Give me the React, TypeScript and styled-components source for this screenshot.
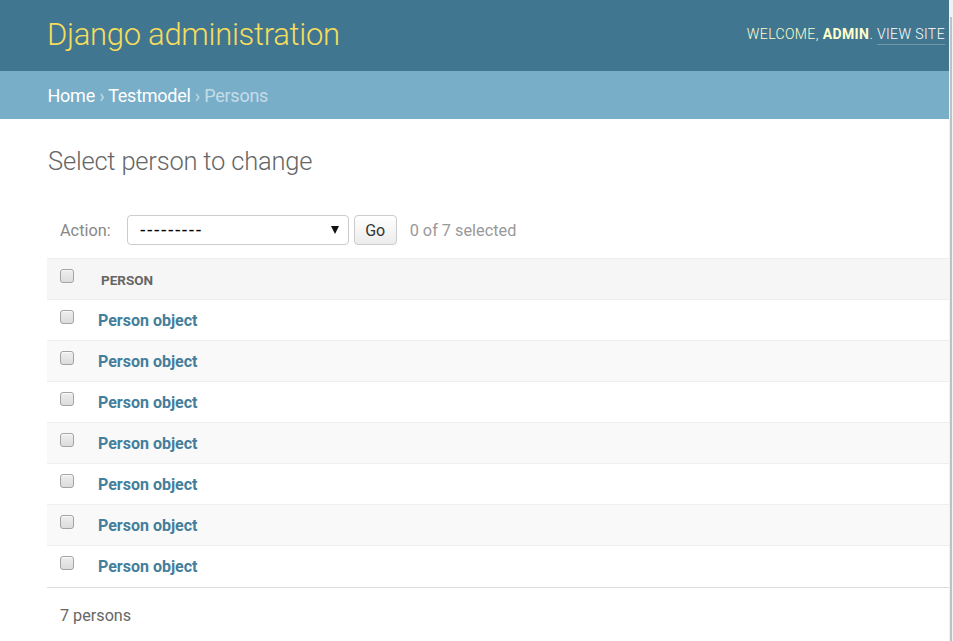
import React from "react";
import styled, { createGlobalStyle } from "styled-components";

const GlobalStyle = createGlobalStyle`
  html, body { margin: 0; padding: 0; background: #fff; }
  body {
    font-family: Roboto, "Liberation Sans", Arial, sans-serif;
    color: #333;
    overflow: hidden;
  }
  * { box-sizing: border-box; }
`;

const Frame = styled.div`
  display: flex;
  height: 641px;
  width: 953px;
`;

const Page = styled.div`
  width: 949px;
  flex: none;
  overflow: hidden;
`;

const ScrollTrack = styled.div`
  width: 4px;
  flex: none;
  background: #f1f1f1;
  display: flex;
  flex-direction: column;
  padding: 17px 1px 0 1px;
`;

const ScrollThumb = styled.div`
  flex: 1;
  background: #c1c1c1;
`;

const Header = styled.header`
  height: 71px;
  background: #417690;
  display: flex;
  justify-content: space-between;
  align-items: flex-start;
  padding: 0 4px 0 47px;
`;

const Branding = styled.h1`
  margin: 0;
  padding-top: 15px;
  font-size: 31px;
  line-height: 40px;
  letter-spacing: -0.3px;
  font-weight: 300;
  color: #f5dd5d;
`;

const UserTools = styled.div`
  padding-top: 24px;
  font-size: 14px;
  line-height: 20px;
  letter-spacing: 0.4px;
  font-weight: 300;
  text-transform: uppercase;
  color: #ffc;
  white-space: nowrap;
`;

const Strong = styled.strong`
  font-weight: 700;
`;

const ToolLink = styled.a`
  color: #fff;
  text-decoration: none;
  border-bottom: 1px solid rgba(255, 255, 255, 0.25);
  padding-bottom: 2px;
`;

const Breadcrumbs = styled.nav`
  height: 48px;
  background: #79aec8;
  padding: 12.5px 47.5px 0;
  font-size: 18px;
  line-height: 24px;
  letter-spacing: -0.25px;
  color: #c4dce8;
`;

const Crumb = styled.a`
  color: #fff;
  text-decoration: none;
`;

const Content = styled.main`
  padding: 26px 0 0 47px;
`;

const Title = styled.h1`
  margin: 0 0 25px;
  padding-left: 1px;
  font-size: 25.5px;
  line-height: 32px;
  letter-spacing: -0.2px;
  font-weight: 300;
  color: #666;
`;

const ActionsBar = styled.div`
  height: 56px;
  display: flex;
  align-items: center;
  padding-left: 13px;
  font-size: 16.3px;
  color: #999;
`;

const ActionLabel = styled.label`
  color: #888;
  margin-right: 16px;
`;

const FakeSelect = styled.div`
  width: 222px;
  height: 30px;
  border: 1px solid #ccc;
  border-radius: 4px;
  background: #fff;
  display: flex;
  align-items: center;
  justify-content: space-between;
  padding: 0 9px 0 12px;
  font-family: "Liberation Sans", Arial, sans-serif;
  font-size: 18px;
  letter-spacing: 1px;
  color: #000;
`;

const GoButton = styled.button`
  margin-left: 5px;
  width: 43px;
  height: 30px;
  border: 1px solid #ccc;
  border-radius: 4px;
  background: linear-gradient(#fff, #ececec);
  font-family: Roboto, "Liberation Sans", Arial, sans-serif;
  font-size: 16px;
  color: #333;
  padding: 0;
`;

const Counter = styled.span`
  margin-left: 13px;
  color: #999;
`;

const Table = styled.div`
  border-bottom: 1px solid #ddd;
`;

const Row = styled.div<{ $head?: boolean; $alt?: boolean }>`
  display: grid;
  grid-template-columns: 51px 1fr;
  height: ${(p) => (p.$head ? 42 : 41)}px;
  border-top: ${(p) => (p.$head ? "1px solid #eee" : "none")};
  border-bottom: 1px solid #eee;
  background: ${(p) => (p.$head ? "#f6f6f6" : p.$alt ? "#f9f9f9" : "#fff")};
  &:last-child { border-bottom: none; }
`;

const CheckCell = styled.div`
  padding: 10px 0 0 13px;
`;

const Checkbox = styled.span`
  display: block;
  width: 14px;
  height: 14px;
  border: 1px solid #a3a3a3;
  border-radius: 3px;
  background: linear-gradient(#eeeeee, #dcdcdc);
  box-shadow: inset 0 1px 0 rgba(255, 255, 255, 0.7);
`;

const HeadCell = styled.div`
  padding: 12px 0 0 3px;
  font-size: 13.5px;
  line-height: 18px;
  font-weight: 700;
  color: #666;
  text-transform: uppercase;
`;

const LinkCell = styled.div`
  padding-top: 10px;
  font-size: 16px;
  line-height: 22px;
  font-weight: 700;
`;

const ObjLink = styled.a`
  color: #447e9b;
  text-decoration: none;
`;

const Paginator = styled.p`
  margin: 16.5px 0 0;
  padding-left: 13px;
  font-size: 16.2px;
  line-height: 22px;
  color: #666;
`;

export default function App() {
  const rows = Array.from({ length: 7 });
  return (
    <>
      <GlobalStyle />
      <Frame>
        <Page>
          <Header>
            <Branding>Django administration</Branding>
            <UserTools>
              Welcome, <Strong>admin</Strong>. <ToolLink href="#">View site</ToolLink>
            </UserTools>
          </Header>
          <Breadcrumbs>
            <Crumb href="#">Home</Crumb> › <Crumb href="#">Testmodel</Crumb> › Persons
          </Breadcrumbs>
          <Content>
            <Title>Select person to change</Title>
            <ActionsBar>
              <ActionLabel>Action:</ActionLabel>
              <FakeSelect>
                <span>---------</span>
                <svg width="8" height="8" viewBox="0 0 8 8">
                  <polygon points="0,0 8,0 4,8" fill="#111" />
                </svg>
              </FakeSelect>
              <GoButton>Go</GoButton>
              <Counter>0 of 7 selected</Counter>
            </ActionsBar>
            <Table>
              <Row $head>
                <CheckCell>
                  <Checkbox />
                </CheckCell>
                <HeadCell>Person</HeadCell>
              </Row>
              {rows.map((_, i) => (
                <Row key={i} $alt={i % 2 === 1}>
                  <CheckCell>
                    <Checkbox />
                  </CheckCell>
                  <LinkCell>
                    <ObjLink href="#">Person object</ObjLink>
                  </LinkCell>
                </Row>
              ))}
            </Table>
            <Paginator>7 persons</Paginator>
          </Content>
        </Page>
        <ScrollTrack>
          <ScrollThumb />
        </ScrollTrack>
      </Frame>
    </>
  );
}
